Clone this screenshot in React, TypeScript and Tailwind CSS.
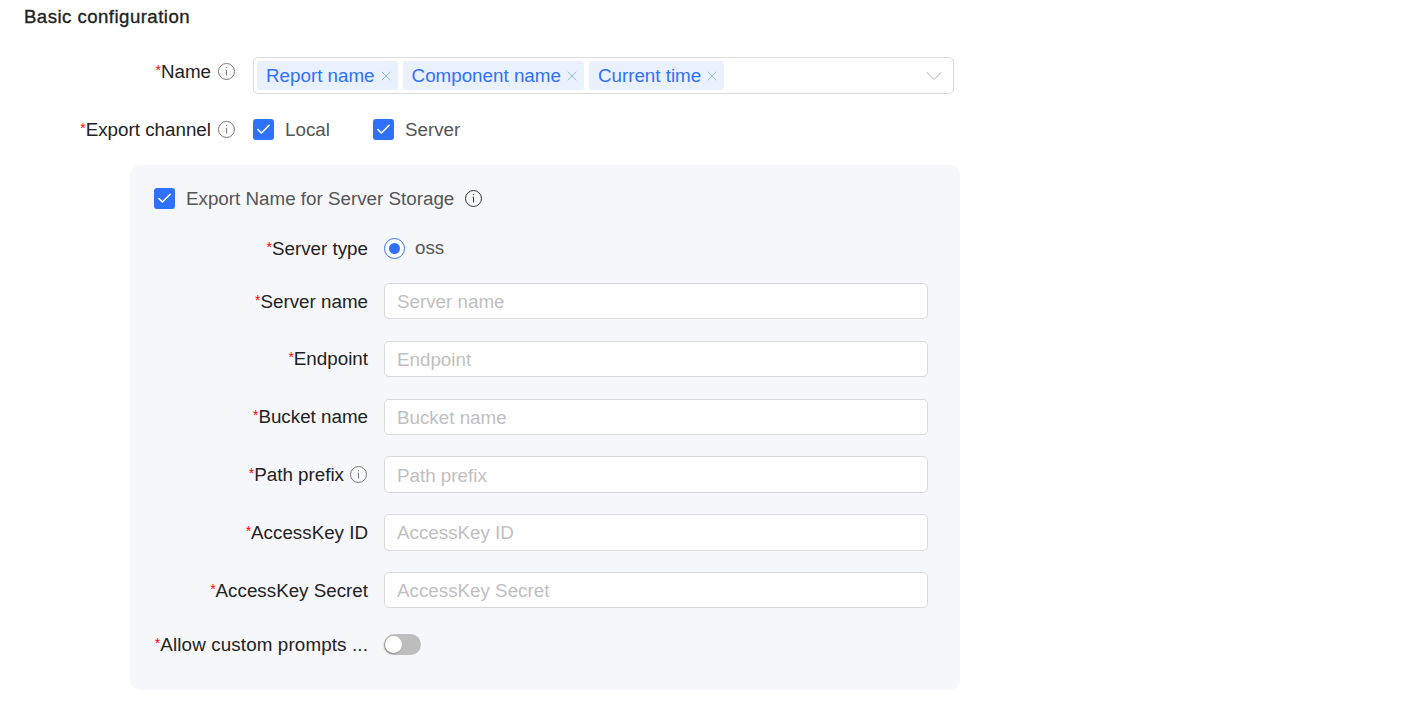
import { Check, ChevronDown, X } from "lucide-react";

const fields: { label: string; info?: boolean }[] = [
  { label: "Server name" },
  { label: "Endpoint" },
  { label: "Bucket name" },
  { label: "Path prefix", info: true },
  { label: "AccessKey ID" },
  { label: "AccessKey Secret" },
];

function InfoIcon({ dark }: { dark?: boolean }) {
  return (
    <svg
      width={19}
      height={19}
      viewBox="0 0 19 19"
      fill="none"
      stroke="currentColor"
      strokeWidth={1}
      className={dark ? "shrink-0 text-[#333]" : "shrink-0 text-[#777]"}
    >
      <circle cx="9.5" cy="9.5" r="8" />
      <path d="M8.6 8.2h.9v5.2" />
      <circle cx="9.5" cy="5.6" r="0.7" fill="currentColor" stroke="none" />
    </svg>
  );
}

function Required({ children }: { children: React.ReactNode }) {
  return (
    <span className="inline-block whitespace-nowrap pt-[2px] text-[#222]">
      <span className="relative top-[-3px] text-[14px] text-[#f00]">*</span>
      {children}
    </span>
  );
}

function Checkbox() {
  return (
    <span className="flex h-[21px] w-[21px] shrink-0 items-center justify-center rounded-[3px] bg-[#2f71fb]">
      <Check size={17} strokeWidth={2.3} className="text-white" />
    </span>
  );
}

function Tag({ text }: { text: string }) {
  return (
    <span className="flex h-[29px] items-center gap-[3px] rounded-[3px] bg-[#e9f0fe] pl-[9px] pr-[4px] text-[#2f71fb]">
      {text}
      <X size={16} strokeWidth={1.1} className="text-[#7fa5f3]" />
    </span>
  );
}

export default function App() {
  return (
    <div className="h-[712px] w-[1408px] overflow-hidden bg-white font-['Liberation_Sans',Arial,sans-serif] text-[18.8px] leading-[24px]">
      <h2 className="pl-6 pt-[5px] text-[18.6px] font-normal tracking-[0.47px] text-[#222] [-webkit-text-stroke:0.35px_#222]">
        Basic configuration
      </h2>

      <div className="mt-[28px] flex items-center">
        <div className="flex w-[236px] items-center justify-end gap-[6px] pb-[8px]">
          <Required>Name</Required>
          <InfoIcon />
        </div>
        <div className="ml-[17px] flex h-[37px] w-[701px] items-center gap-[5px] rounded-[5px] border border-[#d9d9d9] pl-[3px] pr-[5px]">
          <Tag text="Report name" />
          <Tag text="Component name" />
          <Tag text="Current time" />
          <ChevronDown size={28} strokeWidth={0.8} className="ml-auto text-[#aaa]" />
        </div>
      </div>

      <div className="mt-[23px] flex h-[24px] items-center">
        <div className="flex w-[236px] items-center justify-end gap-[6px]">
          <Required>Export channel</Required>
          <InfoIcon />
        </div>
        <label className="ml-[17px] flex w-[120px] items-center gap-[11px] text-[#555]">
          <Checkbox />
          <span className="pt-[2px]">Local</span>
        </label>
        <label className="flex items-center gap-[11px] text-[#555]">
          <Checkbox />
          <span className="pt-[2px]">Server</span>
        </label>
      </div>

      <div className="ml-[130px] mt-[24px] h-[525px] w-[830px] rounded-[10px] bg-[#f6f7fb] pl-6 pr-8 pt-[21px]">
        <div className="flex h-[24px] items-center text-[#555]">
          <Checkbox />
          <span className="ml-[11px] pt-[2px]">Export Name for Server Storage</span>
          <span className="ml-[10px]">
            <InfoIcon dark />
          </span>
        </div>

        <div className="mt-[26px] flex h-[24px] items-center">
          <div className="flex w-[214px] justify-end">
            <Required>Server type</Required>
          </div>
          <span className="ml-4 flex h-[21px] w-[21px] items-center justify-center rounded-full border border-[#2f71fb] bg-white">
            <span className="h-[11px] w-[11px] rounded-full bg-[#2f71fb]" />
          </span>
          <span className="ml-[10px] text-[#555]">oss</span>
        </div>

        <div className="mt-[23px] flex flex-col gap-[21.4px]">
          {fields.map((f) => (
            <div key={f.label} className="flex items-center">
              <div className="flex w-[214px] items-center justify-end gap-[5px]">
                <Required>{f.label}</Required>
                {f.info ? <InfoIcon /> : null}
              </div>
              <input
                placeholder={f.label}
                className="ml-4 h-[36.4px] w-[544px] rounded-[5px] border border-[#d9d9d9] bg-white px-3 pt-[2px] text-[18.8px] outline-none placeholder:text-[#bfbfbf]"
              />
            </div>
          ))}
        </div>

        <div className="mt-[26px] flex h-[21px] items-center">
          <div className="flex w-[214px] justify-end tracking-[0.13px]">
            <Required>Allow custom prompts ...</Required>
          </div>
          <span className="ml-4 flex h-[21px] w-[37px] items-center rounded-full bg-[#bdbdbd] pl-[1px]">
            <span className="h-[17px] w-[17px] rounded-full bg-white shadow-[-1px_1px_2px_rgba(0,0,0,0.3)]" />
          </span>
        </div>
      </div>
    </div>
  );
}
